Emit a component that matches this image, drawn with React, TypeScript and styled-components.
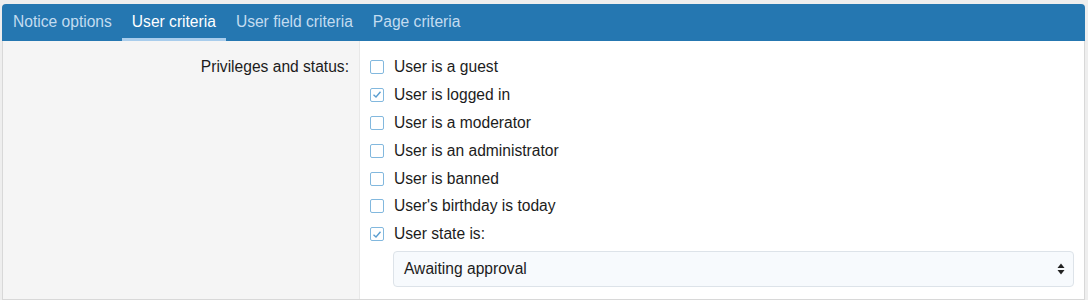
import React from "react";
import styled, { createGlobalStyle } from "styled-components";

const Global = createGlobalStyle`
  html, body { margin: 0; padding: 0; background: #eeeeee; }
  body { font-family: "Liberation Sans", Arial, sans-serif; }
  * { box-sizing: border-box; }
`;

const Page = styled.div`
  padding: 4px 3px 0 2px;
  width: 1088px;
  height: 300px;
  overflow: hidden;
`;

const Panel = styled.div`
  border: 1px solid #d8d8d8;
  border-top: none;
  border-radius: 4px 4px 0 0;
  background: #fff;
  height: 296px;
  display: flex;
  flex-direction: column;
`;

const TabBar = styled.div`
  background: #2577b1;
  border-radius: 4px 4px 0 0;
  height: 37px;
  display: flex;
  align-items: stretch;
  margin: 0 -1px;
  padding-left: 1px;
`;

const Tab = styled.div<{ $active?: boolean }>`
  padding: 1px 10px 0;
  display: flex;
  align-items: center;
  font-size: 15.6px;
  color: ${(p) => (p.$active ? "#ffffff" : "#c3dcf0")};
  border-bottom: 3px solid ${(p) => (p.$active ? "#a9cdec" : "transparent")};
`;

const Body = styled.div`
  flex: 1;
  display: flex;
`;

const LabelCol = styled.div`
  width: 357px;
  background: #f5f5f5;
  border-right: 1px solid #e8e8e8;
  text-align: right;
  padding: 17px 10px 0 0;
  font-size: 15.6px;
  color: #1c1c1c;
`;

const InputCol = styled.div`
  flex: 1;
  padding: 12px 10px 0 10px;
  display: flex;
  flex-direction: column;
`;

const Row = styled.label`
  display: flex;
  align-items: center;
  height: 27.9px;
  font-size: 15.6px;
  color: #1c1c1c;
`;

const Box = styled.span`
  width: 14px;
  height: 14px;
  border: 1.5px solid #82b8de;
  border-radius: 2px;
  background: #fff;
  margin-right: 10px;
  display: inline-flex;
  align-items: center;
  justify-content: center;
`;

const SelectBox = styled.div`
  margin: 3px 0 0 23px;
  height: 36px;
  border: 1px solid #dde3e9;
  border-radius: 4px;
  background: #f7fafd;
  display: flex;
  align-items: center;
  justify-content: space-between;
  padding: 0 8px 0 10px;
  font-size: 15.6px;
  color: #1c1c1c;
`;

const Check = () => (
  <svg width="10" height="9" viewBox="0 0 10 9">
    <path d="M1.5 4.8 L4 7 L8.5 1.8" fill="none" stroke="#5a9ed0" strokeWidth="1.4" />
  </svg>
);

const Arrows = () => (
  <svg width="8" height="12" viewBox="0 0 8 12">
    <path d="M4 0.5 L7.5 5 L0.5 5 Z" fill="#222" />
    <path d="M4 11.5 L7.5 7 L0.5 7 Z" fill="#222" />
  </svg>
);

const items: [string, boolean][] = [
  ["User is a guest", false],
  ["User is logged in", true],
  ["User is a moderator", false],
  ["User is an administrator", false],
  ["User is banned", false],
  ["User's birthday is today", false],
  ["User state is:", true],
];

export default function App() {
  return (
    <>
      <Global />
      <Page>
        <Panel>
          <TabBar>
            <Tab>Notice options</Tab>
            <Tab $active>User criteria</Tab>
            <Tab>User field criteria</Tab>
            <Tab>Page criteria</Tab>
          </TabBar>
          <Body>
            <LabelCol>Privileges and status:</LabelCol>
            <InputCol>
              {items.map(([t, c]) => (
                <Row key={t}>
                  <Box>{c && <Check />}</Box>
                  {t}
                </Row>
              ))}
              <SelectBox>
                Awaiting approval
                <Arrows />
              </SelectBox>
            </InputCol>
          </Body>
        </Panel>
      </Page>
    </>
  );
}
